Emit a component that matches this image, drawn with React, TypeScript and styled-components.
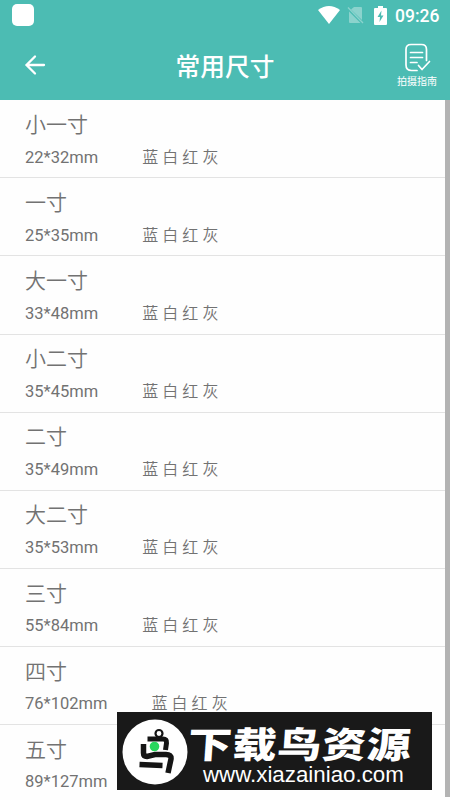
import React from 'react';
import styled, { createGlobalStyle } from 'styled-components';

const Global = createGlobalStyle`
  * { box-sizing: border-box; }
  html, body { margin: 0; background: #fff; overflow: hidden; }
  body { font-family: Roboto, "Noto Sans CJK SC", sans-serif; }
`;

const Screen = styled.div`
  position: relative;
  width: 450px;
  height: 800px;
  overflow: hidden;
  background: #fefefe;
  display: flex;
  flex-direction: column;
`;

const Header = styled.header`
  flex: none;
  height: 100px;
  background: #4cbcb3;
  color: #fff;
`;

const StatusBar = styled.div`
  height: 31px;
  padding: 0 10px 0 12px;
  display: flex;
  align-items: center;
`;

const AppDot = styled.div`
  width: 22px;
  height: 22px;
  border-radius: 5px;
  background: #fff;
  margin: -1px auto 0 0;
`;

const Wifi = styled.svg`
  width: 22px;
  height: 18px;
  margin: -1px 7px 0 0;
`;

const NoSim = styled.svg`
  width: 17px;
  height: 18px;
  margin: -1px 10px 0 0;
`;

const Battery = styled.svg`
  width: 13px;
  height: 19px;
  margin: -1px 8px 0 0;
`;

const Clock = styled.span`
  font-size: 17.5px;
  font-weight: 500;
  line-height: 33px;
  width: 45px;
  white-space: nowrap;
  padding-top: 1px;
`;

const NavBar = styled.div`
  height: 69px;
  display: grid;
  grid-template-columns: 60px 1fr 60px;
  padding: 0 3px 0 0;
`;

const BackIcon = styled.svg`
  width: 22px;
  height: 22px;
  margin: 23px 0 0 24px;
`;

const Title = styled.h1`
  margin: 3px 0 0 3px;
  text-align: center;
  font-size: 24.7px;
  font-weight: 500;
  line-height: 68px;
`;

const Guide = styled.div`
  display: flex;
  flex-direction: column;
  align-items: center;
  padding: 12px 0 0 0;
`;

const GuideIcon = styled.svg`
  width: 27px;
  height: 29px;
  flex: none;
`;

const GuideLabel = styled.span`
  font-size: 10px;
  line-height: 16px;
  margin-top: 2px;
  white-space: nowrap;
`;

const Body = styled.main`
  flex: 1;
  min-height: 0;
  display: flex;
`;

const List = styled.ul`
  flex: 1;
  margin: 0;
  padding: 0;
  list-style: none;
`;

const ScrollThumb = styled.div`
  width: 5px;
  height: 697px;
  background: #b3b3b3;
`;

const Row = styled.li`
  height: 78.1px;
  padding: 9px 0 0 25px;
  color: #727272;
  position: relative;

  &::after {
    content: '';
    position: absolute;
    left: 0;
    right: 0;
    bottom: -0.3px;
    height: 1px;
    background: #e3e3e3;
  }
`;

const Name = styled.div`
  font-size: 21px;
  font-weight: 350;
  line-height: 32px;
`;

const Details = styled.div`
  display: flex;
  gap: 44px;
  margin-top: 0.6px;
  font-size: 16.5px;
  line-height: 32px;
  white-space: nowrap;
`;

const Colors = styled.span`
  font-size: 16px;
  font-weight: 350;
  letter-spacing: 4.1px;
`;

const Banner = styled.aside`
  position: absolute;
  left: 117px;
  top: 712px;
  width: 315px;
  height: 78px;
  background: #191919;
  color: #fff;
  display: flex;
  padding: 7px 0 0 5px;
`;

const Logo = styled.svg`
  width: 66px;
  height: 66px;
  flex: none;
`;

const BannerText = styled.div`
  display: flex;
  flex-direction: column;
  white-space: nowrap;
`;

const BannerName = styled.strong`
  font-family: "Noto Sans CJK SC", sans-serif;
  font-size: 44px;
  font-weight: 900;
  line-height: 44px;
  letter-spacing: 0.8px;
  transform: translateY(1px) skewX(-4deg) scaleY(.82);
`;

const BannerUrl = styled.span`
  font-family: "Liberation Sans", sans-serif;
  font-size: 22.3px;
  line-height: 22px;
  margin: 1px 0 0 15px;
`;

const sizes = [
  ['小一寸', '22*32mm'],
  ['一寸', '25*35mm'],
  ['大一寸', '33*48mm'],
  ['小二寸', '35*45mm'],
  ['二寸', '35*49mm'],
  ['大二寸', '35*53mm'],
  ['三寸', '55*84mm'],
  ['四寸', '76*102mm'],
  ['五寸', '89*127mm'],
];

export default function App() {
  return (
    <Screen>
      <Global />
      <Header>
        <StatusBar>
          <AppDot />
          <Wifi viewBox="0 0 22 18">
            <path d="M0 4Q11-4 22 4L11 18Z" fill="#fff" />
          </Wifi>
          <NoSim viewBox="0 0 17 18">
            <path d="M7 1H14Q15 1 15 2V14L4 3.5ZM2 5.5L13.5 17H3Q2 17 2 16Z" fill="#8bd3cd" />
            <path d="M1 1.5L16 17" stroke="#8bd3cd" strokeWidth="1.3" />
          </NoSim>
          <Battery viewBox="0 0 13 19">
            <path d="M4 0H9V2H12Q13 2 13 3V18Q13 19 12 19H1Q0 19 0 18V3Q0 2 1 2H4Z" fill="#fff" />
            <path d="M7.5 4.5L3.5 11H6L5.5 16L9.5 9.5H7Z" fill="#4cbcb3" />
          </Battery>
          <Clock>09:26</Clock>
        </StatusBar>
        <NavBar>
          <BackIcon viewBox="0 0 22 22" fill="none" stroke="#fff" strokeWidth="2.3" strokeLinecap="round">
            <path d="M20 11H3M11 2.5L2.5 11L11 19.5" />
          </BackIcon>
          <Title>常用尺寸</Title>
          <Guide>
            <GuideIcon viewBox="0 0 27 29" fill="none" stroke="#fff" strokeWidth="1.7" strokeLinecap="round" strokeLinejoin="round">
              <path d="M13 27.5H7.5Q2 27.5 2 22V6.5Q2 1.5 7 1.5H17.5Q22.5 1.5 22.5 6.5V17.5" />
              <path d="M6.5 9.5H18.5M6.5 14.5H18.5M6.5 19.5H13M14.5 22.5L18 26.5L25.5 18.5" />
            </GuideIcon>
            <GuideLabel>拍摄指南</GuideLabel>
          </Guide>
        </NavBar>
      </Header>
      <Body>
        <List>
          {sizes.map(([name, size]) => (
            <Row key={name}>
              <Name>{name}</Name>
              <Details>
                <span>{size}</span>
                <Colors>蓝白红灰</Colors>
              </Details>
            </Row>
          ))}
        </List>
        <ScrollThumb />
      </Body>
      <Banner>
        <Logo viewBox="0 0 66 66">
          <circle cx="33" cy="33" r="32.5" fill="#fff" />
          <g fill="none" stroke="#151515">
            <circle cx="37" cy="14.5" r="3.5" strokeWidth="2.2" />
            <path d="M25.5 20H41Q45 20 44.5 24L43.5 31" strokeWidth="5" />
            <path d="M21.5 25V34Q21.5 37.5 25 37.5L33 35.500H44Q49.500 35.500 49 40L46 54" strokeWidth="5.500" />
            <path d="M17.500 45.500L40.500 46.500" strokeWidth="5.500" />
          </g>
          <circle cx="32.5" cy="27.5" r="4.8" fill="#29d65d" />
        </Logo>
        <BannerText>
          <BannerName>下载鸟资源</BannerName>
          <BannerUrl>www.xiazainiao.com</BannerUrl>
        </BannerText>
      </Banner>
    </Screen>
  );
}
